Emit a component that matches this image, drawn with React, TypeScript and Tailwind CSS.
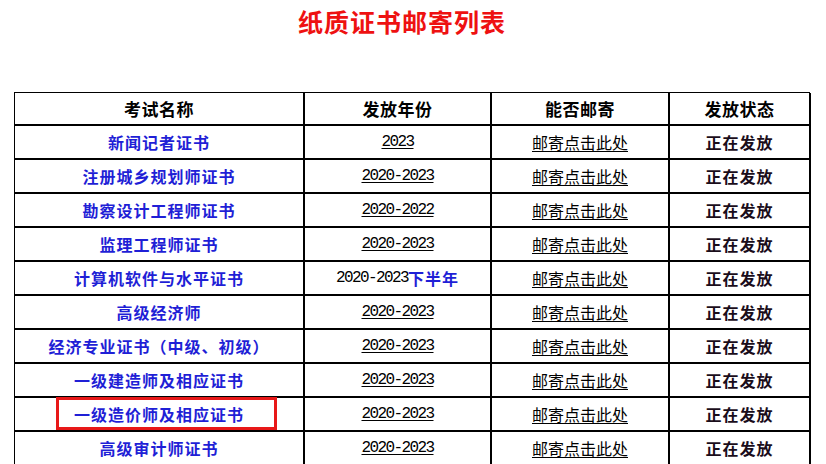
import React from 'react';

interface Row {
  name: string;
  year: string;
  half?: boolean;
  boxed?: boolean;
}

const rows: Row[] = [
  { name: '新闻记者证书', year: '2023' },
  { name: '注册城乡规划师证书', year: '2020-2023' },
  { name: '勘察设计工程师证书', year: '2020-2022' },
  { name: '监理工程师证书', year: '2020-2023' },
  { name: '计算机软件与水平证书', year: '2020-2023', half: true },
  { name: '高级经济师', year: '2020-2023' },
  { name: '经济专业证书（中级、初级）', year: '2020-2023' },
  { name: '一级建造师及相应证书', year: '2020-2023' },
  { name: '一级造价师及相应证书', year: '2020-2023', boxed: true },
  { name: '高级审计师证书', year: '2020-2023' },
];

const cjk = "font-['Microsoft_YaHei','Noto_Sans_CJK_SC',sans-serif]";
const cell = 'relative h-[34px] border-r-2 border-b-2 border-black flex items-center justify-center';
const head = 'h-[33px] border-r-2 border-b-2 border-black flex items-center justify-center font-bold text-[17px] tracking-[0.5px] text-black';
const mono = "font-['Liberation_Mono',monospace] text-[16px] tracking-[-1.6px]";

export default function App() {
  return (
    <div className={`w-[826px] h-[464px] overflow-hidden bg-white ${cjk}`}>
      {/* Title */}
      <h1 className="text-center text-[25px] leading-[30px] font-bold text-[#ee1111] pt-[6px] tracking-[1px] pr-[22px]">
        纸质证书邮寄列表
      </h1>

      {/* Table */}
      <div className="mt-[56px] ml-[14px] w-[796px] border-l border-t border-black grid grid-cols-[290px_187px_178px_141px]">
        <div className={head}>考试名称</div>
        <div className={head}>发放年份</div>
        <div className={head}>能否邮寄</div>
        <div className={head}>发放状态</div>

        {rows.map((r, i) => (
          <React.Fragment key={i}>
            <div className={cell}>
              <span className="font-bold text-[16px] tracking-[1px] text-[#1f1fd6]">{r.name}</span>
              {r.boxed && (
                <div className="absolute left-[41px] top-[-1px] w-[221px] h-[33px] border-[3px] border-[#e81818]" />
              )}
            </div>
            <div className={cell}>
              {r.half ? (
                <span className="flex items-center">
                  <span className={`${mono} text-black`}>{r.year}</span>
                  <span className="font-bold text-[16px] text-[#1f1fd6] tracking-[1px]">下半年</span>
                </span>
              ) : (
                <span className={`${mono} text-black underline underline-offset-2`}>{r.year}</span>
              )}
            </div>
            <div className={cell}>
              <span className="text-[16px] text-black underline underline-offset-2">邮寄点击此处</span>
            </div>
            <div className={cell}>
              <span className="font-bold text-[16px] tracking-[1px] text-[#1a0d1a]">正在发放</span>
            </div>
          </React.Fragment>
        ))}
      </div>
    </div>
  );
}
